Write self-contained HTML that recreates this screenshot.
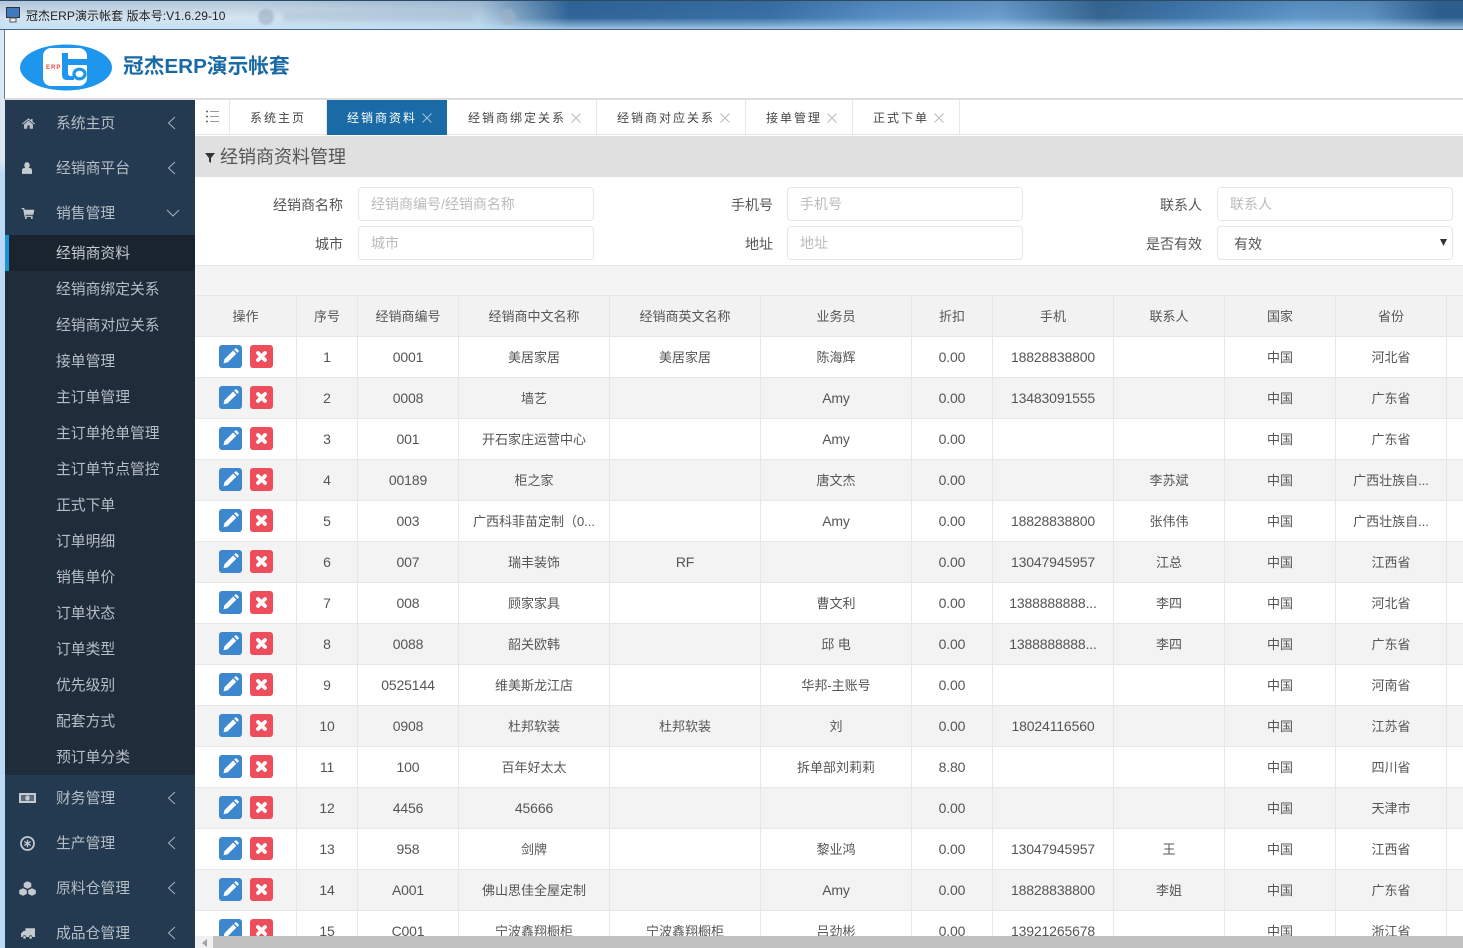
<!DOCTYPE html>
<html><head><meta charset="utf-8"><style>
*{box-sizing:border-box}
html,body{margin:0;padding:0;width:1463px;height:948px;overflow:hidden;background:#fff;font-family:"Liberation Sans","Noto Sans CJK SC",sans-serif;font-size:14px;color:#555}
.a{position:absolute}
#bar{left:0;top:0;width:1463px;height:30px;border-top:1px solid #2c4a66;border-bottom:1px solid #4d6579;background:linear-gradient(180deg,rgba(40,85,130,.2) 0,rgba(120,170,215,0) 60%,rgba(190,225,250,.75) 100%),linear-gradient(90deg,#d3e2ef 0,#d6e4ef 240px,#b7cfe3 480px,#2f6498 570px,#3a70a6 770px,#5a90c6 880px,#6d9fcf 1000px,#35648f 1100px,#3f76ab 1180px,#6198c9 1300px,#5f93c2 1370px,#2d5f8e 1440px,#2d5f8e 1463px)}
#bar span{position:absolute;left:26px;top:6px;font-size:12px;letter-spacing:.06px;color:#222;white-space:nowrap}
#left{left:0;top:30px;width:5px;height:918px;background:linear-gradient(180deg,#dbe8f3 0,#dbe8f3 130px,#b9d9f7 145px,#b9d9f7 100%)}
#head{left:4px;top:30px;width:1459px;height:70px;background:#fff;border-left:1px solid #6a7d8d;border-bottom:2px solid #dcdcdc}
#brand{left:123px;top:51px;font-size:20.700px;font-weight:bold;color:#1a6aa6;white-space:nowrap;line-height:32px}
#side{left:5px;top:100px;width:190px;height:848px;background:#243a50;overflow:hidden}
.m{position:absolute;left:51px;font-size:14.800px;line-height:22px;color:#b6bec6;white-space:nowrap}
#sub{left:0;top:135px;width:190px;height:540px;background:#1f2c3a}
#act{left:0;top:135px;width:190px;height:36px;background:#19242f;border-left:4px solid #1c93d6}
#tabs{left:195px;top:100px;width:1268px;height:35px;background:#fff;border-bottom:1px solid #e7e7e7}
.t{position:absolute;top:0;height:35px;border-right:1px solid #e7e7e7;font-size:12px;letter-spacing:2px;line-height:36px;color:#444;white-space:nowrap}
.t span{position:absolute;top:0}
#panel{left:195px;top:136px;width:1268px;height:41px;background:#e0e0e0}
#panel b{position:absolute;left:25px;top:9px;font-weight:normal;font-size:18px;line-height:24px;color:#555;white-space:nowrap}
#form{left:195px;top:177px;width:1268px;height:89px;background:#fff;border-bottom:1px solid #e7e7e7}
.lb{position:absolute;font-size:14px;line-height:20px;color:#555;text-align:right;width:120px;white-space:nowrap}
.ip{position:absolute;width:236px;height:34px;border:1px solid #e5e6e7;border-radius:4px;background:#fff;font-size:14px;line-height:33px;padding-left:12px;color:#bbb;white-space:nowrap}
#band{left:195px;top:266px;width:1268px;height:30px;background:#f4f4f4}
#tw{left:195px;top:295px;width:1268px;height:641px;overflow:hidden}
table{border-collapse:collapse;table-layout:fixed;width:1312px;margin-left:-1px}
th,td{height:41px;padding:1px 0 0;border:1px solid #e7e7e7;text-align:center;font-size:13px;font-weight:normal;color:#555;white-space:nowrap;overflow:hidden;line-height:20px}
td:first-child{padding:0}
td:nth-child(2),td:nth-child(3),td:nth-child(7),td:nth-child(8),.n{font-size:14px;letter-spacing:-.15px;padding:0}
th{background:#f2f2f2}
tr:nth-child(odd) td{background:#f3f3f3}
.b{display:inline-block;width:23px;height:23px;border-radius:3px;vertical-align:middle;position:relative;top:-1px}
.b svg{position:absolute;left:0;top:0}
.bl{background:#3d87ce;margin-right:8px}
.rd{background:#ee4e5c}
#sb{left:195px;top:936px;width:1268px;height:12px;background:#f1f1f1}
#sb i{position:absolute;left:18px;top:0;width:1250px;height:12px;background:#c1c1c1}
</style></head><body>
<svg width="0" height="0" style="position:absolute"><defs>
<symbol id="pen" viewBox="0 0 23 23"><path d="M5 18l1-4.200 8.600-8.600 3.200 3.200-8.600 8.600zM15.600 4.200l1.200-1a1 1 0 0 1 1.300 0l1.900 1.900a1 1 0 0 1 0 1.300l-1.100 1.200z" fill="#fff" transform="translate(-.5 .3)"/></symbol>
<symbol id="xx" viewBox="0 0 23 23"><path d="M8 8l7 7M15 8l-7 7" stroke="#fff" stroke-width="3.800" stroke-linecap="round" fill="none"/></symbol>
<symbol id="chl" viewBox="0 0 12 14"><path d="M9 1L2.500 7 9 13" fill="none" stroke="#aab3bc" stroke-width="1"/></symbol>
</defs></svg>

<div id="bar" class="a"><svg class="a" style="left:6px;top:6px" width="15" height="16" viewBox="0 0 15 16"><rect x=".5" y=".5" width="13" height="10" fill="#3f79c0" stroke="#333"/><rect x="4" y="11" width="6" height="4" fill="#eee" stroke="#555"/></svg><span>冠杰ERP演示帐套 版本号:V1.6.29-10</span>
<div class="a" style="left:258px;top:8px;width:16px;height:16px;border-radius:8px;background:#8fa5b8;opacity:.5;filter:blur(1px)"></div><div class="a" style="left:283px;top:11px;width:190px;height:9px;background:#a8bdcf;opacity:.5;filter:blur(2px)"></div><div class="a" style="left:500px;top:8px;width:16px;height:16px;border-radius:8px;background:#9fb4c6;opacity:.6;filter:blur(1px)"></div></div>
<div id="left" class="a"></div>
<div id="head" class="a"></div>
<svg class="a" style="left:20px;top:44px" width="92" height="47" viewBox="0 0 92 47">
<ellipse cx="46" cy="23.500" rx="46" ry="23" fill="#1e96ee"/>
<rect x="23" y="4" width="44" height="38" rx="8" fill="#fff"/>
<rect x="42" y="9" width="6" height="20" fill="#1e96ee"/>
<rect x="42" y="15" width="26" height="6" fill="#1e96ee"/>
<path d="M42 28v3q0 5 5 5h7v-4h-3q-3 0-3-3v-1z" fill="#1e96ee"/>
<ellipse cx="59.500" cy="30" rx="5.500" ry="4.800" fill="none" stroke="#1e96ee" stroke-width="3.200"/>
<text x="26" y="25" font-family="Liberation Sans" font-size="6" font-weight="bold" fill="#e8423f" letter-spacing="1">ERP</text>
</svg>
<div id="brand" class="a">冠杰ERP演示帐套</div>

<div id="side" class="a">
<div id="sub" class="a"></div><div id="act" class="a"></div>
<svg class="a" style="left:17px;top:18px" width="13" height="11" viewBox="0 0 16 13"><path d="M8 0l3 2.500V1h2v3.200L16 6.700l-.8 1L8 2 .8 7.700 0 6.700zM2.500 7.500L8 3l5.500 4.500V13H9.500V9h-3v4h-4z" fill="#b6bec6"/></svg>
<div class="m" style="top:13px">系统主页</div><svg class="a" style="left:161px;top:16px" width="12" height="14"><use href="#chl"/></svg>
<svg class="a" style="left:17px;top:62px" width="10" height="12" viewBox="0 0 12 14"><ellipse cx="6" cy="3.800" rx="3.300" ry="3.800" fill="#c4cad0"/><path d="M0 14V10q0-3 3-3h6q3 0 3 3v4z" fill="#c4cad0"/></svg>
<div class="m" style="top:58px">经销商平台</div><svg class="a" style="left:161px;top:61px" width="12" height="14"><use href="#chl"/></svg>
<svg class="a" style="left:16px;top:108px" width="14" height="11" viewBox="0 0 15 13"><path d="M0 0h3l.5 2H15l-1.200 6H4.500l.2 1.200H13v1.300H3.500L1.800 1.300H0z" fill="#c4cad0"/><circle cx="5" cy="11.800" r="1.200" fill="#c4cad0"/><circle cx="12" cy="11.800" r="1.200" fill="#c4cad0"/></svg>
<div class="m" style="top:103px">销售管理</div><svg class="a" style="left:161px;top:108px" width="14" height="10" viewBox="0 0 14 10"><path d="M1 2l6 6 6-6" fill="none" stroke="#aab3bc"/></svg>

<div class="m" style="top:143px;color:#c4cad0">经销商资料</div>
<div class="m" style="top:179px">经销商绑定关系</div>
<div class="m" style="top:215px">经销商对应关系</div>
<div class="m" style="top:251px">接单管理</div>
<div class="m" style="top:287px">主订单管理</div>
<div class="m" style="top:323px">主订单抢单管理</div>
<div class="m" style="top:359px">主订单节点管控</div>
<div class="m" style="top:395px">正式下单</div>
<div class="m" style="top:431px">订单明细</div>
<div class="m" style="top:467px">销售单价</div>
<div class="m" style="top:503px">订单状态</div>
<div class="m" style="top:539px">订单类型</div>
<div class="m" style="top:575px">优先级别</div>
<div class="m" style="top:611px">配套方式</div>
<div class="m" style="top:647px">预订单分类</div>

<svg class="a" style="left:14px;top:693px" width="17" height="10" viewBox="0 0 17 10"><path fill-rule="evenodd" d="M0 0h17v10H0zM2 2v6h13V2z" fill="#c4cad0"/><rect x="2" y="2" width="13" height="6" fill="#c4cad0" opacity=".35"/><ellipse cx="8.500" cy="5" rx="2.200" ry="2.600" fill="#c4cad0"/></svg>
<div class="m" style="top:688px">财务管理</div><svg class="a" style="left:161px;top:691px" width="12" height="14"><use href="#chl"/></svg>
<svg class="a" style="left:15px;top:736px" width="15" height="15" viewBox="0 0 15 15"><circle cx="7.500" cy="7.500" r="6.500" fill="none" stroke="#c4cad0" stroke-width="1.800"/><path d="M7.500 3.800v7.400M4.300 5.600l6.400 3.800M10.700 5.600l-6.400 3.800" stroke="#c4cad0" stroke-width="1.300"/></svg>
<div class="m" style="top:733px">生产管理</div><svg class="a" style="left:161px;top:736px" width="12" height="14"><use href="#chl"/></svg>
<svg class="a" style="left:13px;top:781px" width="19" height="15" viewBox="0 0 19 15"><path d="M9.500 0l4 2v4l-4 2-4-2V2zM5 7l4 2v4l-4 2-4-2V9zM14 7l4 2v4l-4 2-4-2V9z" fill="#c4cad0" stroke="#243a50" stroke-width=".4"/></svg>
<div class="m" style="top:778px">原料仓管理</div><svg class="a" style="left:161px;top:781px" width="12" height="14"><use href="#chl"/></svg>
<svg class="a" style="left:16px;top:828px" width="14" height="11" viewBox="0 0 16 12"><path d="M5 0h11v10H13a2 2 0 0 0-4 0H6a2 2 0 0 0-4 0H0V6l3-3h2z" fill="#c4cad0"/><circle cx="4" cy="10.500" r="1.500" fill="#c4cad0"/><circle cx="11" cy="10.500" r="1.500" fill="#c4cad0"/></svg>
<div class="m" style="top:823px">成品仓管理</div><svg class="a" style="left:161px;top:826px" width="12" height="14"><use href="#chl"/></svg>
</div>

<div id="tabs" class="a">
<div class="t" style="left:0;width:35px"><svg class="a" style="left:11px;top:10px" width="13" height="13" viewBox="0 0 13 13"><path d="M0 1.500h2M0 6.500h2M0 11.500h2" stroke="#666" stroke-width="1.500"/><path d="M4 1.500h9M4 6.500h9M4 11.500h9" stroke="#999"/></svg></div>
<div class="t" style="left:35px;width:97px"><span style="left:20px">系统主页</span></div>
<div class="t" style="left:132px;width:120px;background:#1a6aa6;color:#fff;border-color:#1a6aa6"><span style="left:20px">经销商资料</span><svg class="a" style="left:95px;top:13px" width="10" height="10"><path d="M.5.500l9 9M9.500.500l-9 9" stroke="#9dc0da"/></svg></div>
<div class="t" style="left:252px;width:150px"><span style="left:21px">经销商绑定关系</span><svg class="a" style="left:124px;top:13px" width="10" height="10"><path d="M.5.500l9 9M9.500.500l-9 9" stroke="#bbb"/></svg></div>
<div class="t" style="left:402px;width:149px"><span style="left:20px">经销商对应关系</span><svg class="a" style="left:123px;top:13px" width="10" height="10"><path d="M.5.500l9 9M9.500.500l-9 9" stroke="#bbb"/></svg></div>
<div class="t" style="left:551px;width:107px"><span style="left:20px">接单管理</span><svg class="a" style="left:81px;top:13px" width="10" height="10"><path d="M.5.500l9 9M9.500.500l-9 9" stroke="#bbb"/></svg></div>
<div class="t" style="left:658px;width:107px"><span style="left:20px">正式下单</span><svg class="a" style="left:81px;top:13px" width="10" height="10"><path d="M.5.500l9 9M9.500.500l-9 9" stroke="#bbb"/></svg></div>
</div>

<div id="panel" class="a"><svg class="a" style="left:10px;top:17px" width="10" height="10" viewBox="0 0 10 10"><path d="M0 0h10L6 5v5L4 8.500V5z" fill="#333"/></svg><b>经销商资料管理</b></div>

<div id="form" class="a">
<div class="lb" style="left:28px;top:18px">经销商名称</div><div class="ip" style="left:163px;top:10px">经销商编号/经销商名称</div>
<div class="lb" style="left:458px;top:18px">手机号</div><div class="ip" style="left:592px;top:10px">手机号</div>
<div class="lb" style="left:887px;top:18px">联系人</div><div class="ip" style="left:1022px;top:10px">联系人</div>
<div class="lb" style="left:28px;top:57px">城市</div><div class="ip" style="left:163px;top:49px">城市</div>
<div class="lb" style="left:458px;top:57px">地址</div><div class="ip" style="left:592px;top:49px">地址</div>
<div class="lb" style="left:887px;top:57px">是否有效</div><div class="ip" style="left:1022px;top:49px;color:#555;padding-left:16px;line-height:34px">有效<svg class="a" style="left:222px;top:12px" width="7" height="7"><path d="M0 0h7L3.500 7z" fill="#333"/></svg></div>
</div>
<div id="band" class="a"></div>

<div id="tw" class="a"><table><colgroup><col style="width:102px"><col style="width:61px"><col style="width:101px"><col style="width:151px"><col style="width:151px"><col style="width:151px"><col style="width:81px"><col style="width:121px"><col style="width:111px"><col style="width:111px"><col style="width:111px"><col style="width:60px"></colgroup>
<tr><th>操作</th><th>序号</th><th>经销商编号</th><th>经销商中文名称</th><th>经销商英文名称</th><th>业务员</th><th>折扣</th><th>手机</th><th>联系人</th><th>国家</th><th>省份</th><th></th></tr>
<tr><td><i class="b bl"><svg width="23" height="23"><use href="#pen"/></svg></i><i class="b rd"><svg width="23" height="23"><use href="#xx"/></svg></i></td><td>1</td><td>0001</td><td>美居家居</td><td>美居家居</td><td>陈海辉</td><td>0.00</td><td>18828838800</td><td></td><td>中国</td><td>河北省</td><td></td></tr>
<tr><td><i class="b bl"><svg width="23" height="23"><use href="#pen"/></svg></i><i class="b rd"><svg width="23" height="23"><use href="#xx"/></svg></i></td><td>2</td><td>0008</td><td>墙艺</td><td></td><td class="n">Amy</td><td>0.00</td><td>13483091555</td><td></td><td>中国</td><td>广东省</td><td></td></tr>
<tr><td><i class="b bl"><svg width="23" height="23"><use href="#pen"/></svg></i><i class="b rd"><svg width="23" height="23"><use href="#xx"/></svg></i></td><td>3</td><td>001</td><td>开石家庄运营中心</td><td></td><td class="n">Amy</td><td>0.00</td><td></td><td></td><td>中国</td><td>广东省</td><td></td></tr>
<tr><td><i class="b bl"><svg width="23" height="23"><use href="#pen"/></svg></i><i class="b rd"><svg width="23" height="23"><use href="#xx"/></svg></i></td><td>4</td><td>00189</td><td>柜之家</td><td></td><td>唐文杰</td><td>0.00</td><td></td><td>李苏斌</td><td>中国</td><td>广西壮族自...</td><td></td></tr>
<tr><td><i class="b bl"><svg width="23" height="23"><use href="#pen"/></svg></i><i class="b rd"><svg width="23" height="23"><use href="#xx"/></svg></i></td><td>5</td><td>003</td><td>广西科菲苗定制（0...</td><td></td><td class="n">Amy</td><td>0.00</td><td>18828838800</td><td>张伟伟</td><td>中国</td><td>广西壮族自...</td><td></td></tr>
<tr><td><i class="b bl"><svg width="23" height="23"><use href="#pen"/></svg></i><i class="b rd"><svg width="23" height="23"><use href="#xx"/></svg></i></td><td>6</td><td>007</td><td>瑞丰装饰</td><td class="n">RF</td><td></td><td>0.00</td><td>13047945957</td><td>江总</td><td>中国</td><td>江西省</td><td></td></tr>
<tr><td><i class="b bl"><svg width="23" height="23"><use href="#pen"/></svg></i><i class="b rd"><svg width="23" height="23"><use href="#xx"/></svg></i></td><td>7</td><td>008</td><td>顾家家具</td><td></td><td>曹文利</td><td>0.00</td><td>1388888888...</td><td>李四</td><td>中国</td><td>河北省</td><td></td></tr>
<tr><td><i class="b bl"><svg width="23" height="23"><use href="#pen"/></svg></i><i class="b rd"><svg width="23" height="23"><use href="#xx"/></svg></i></td><td>8</td><td>0088</td><td>韶关欧韩</td><td></td><td>邱 电</td><td>0.00</td><td>1388888888...</td><td>李四</td><td>中国</td><td>广东省</td><td></td></tr>
<tr><td><i class="b bl"><svg width="23" height="23"><use href="#pen"/></svg></i><i class="b rd"><svg width="23" height="23"><use href="#xx"/></svg></i></td><td>9</td><td>0525144</td><td>维美斯龙江店</td><td></td><td>华邦-主账号</td><td>0.00</td><td></td><td></td><td>中国</td><td>河南省</td><td></td></tr>
<tr><td><i class="b bl"><svg width="23" height="23"><use href="#pen"/></svg></i><i class="b rd"><svg width="23" height="23"><use href="#xx"/></svg></i></td><td>10</td><td>0908</td><td>杜邦软装</td><td>杜邦软装</td><td>刘</td><td>0.00</td><td>18024116560</td><td></td><td>中国</td><td>江苏省</td><td></td></tr>
<tr><td><i class="b bl"><svg width="23" height="23"><use href="#pen"/></svg></i><i class="b rd"><svg width="23" height="23"><use href="#xx"/></svg></i></td><td>11</td><td>100</td><td>百年好太太</td><td></td><td>拆单部刘莉莉</td><td>8.80</td><td></td><td></td><td>中国</td><td>四川省</td><td></td></tr>
<tr><td><i class="b bl"><svg width="23" height="23"><use href="#pen"/></svg></i><i class="b rd"><svg width="23" height="23"><use href="#xx"/></svg></i></td><td>12</td><td>4456</td><td class="n">45666</td><td></td><td></td><td>0.00</td><td></td><td></td><td>中国</td><td>天津市</td><td></td></tr>
<tr><td><i class="b bl"><svg width="23" height="23"><use href="#pen"/></svg></i><i class="b rd"><svg width="23" height="23"><use href="#xx"/></svg></i></td><td>13</td><td>958</td><td>剑牌</td><td></td><td>黎业鸿</td><td>0.00</td><td>13047945957</td><td>王</td><td>中国</td><td>江西省</td><td></td></tr>
<tr><td><i class="b bl"><svg width="23" height="23"><use href="#pen"/></svg></i><i class="b rd"><svg width="23" height="23"><use href="#xx"/></svg></i></td><td>14</td><td>A001</td><td>佛山思佳全屋定制</td><td></td><td class="n">Amy</td><td>0.00</td><td>18828838800</td><td>李姐</td><td>中国</td><td>广东省</td><td></td></tr>
<tr><td><i class="b bl"><svg width="23" height="23"><use href="#pen"/></svg></i><i class="b rd"><svg width="23" height="23"><use href="#xx"/></svg></i></td><td>15</td><td>C001</td><td>宁波鑫翔橱柜</td><td>宁波鑫翔橱柜</td><td>吕劲彬</td><td>0.00</td><td>13921265678</td><td></td><td>中国</td><td>浙江省</td><td></td></tr>
</table></div>
<div id="sb" class="a"><svg class="a" style="left:7px;top:3px" width="6" height="8"><path d="M5 0v8L0 4z" fill="#a3a3a3"/></svg><i></i></div>
</body></html>
